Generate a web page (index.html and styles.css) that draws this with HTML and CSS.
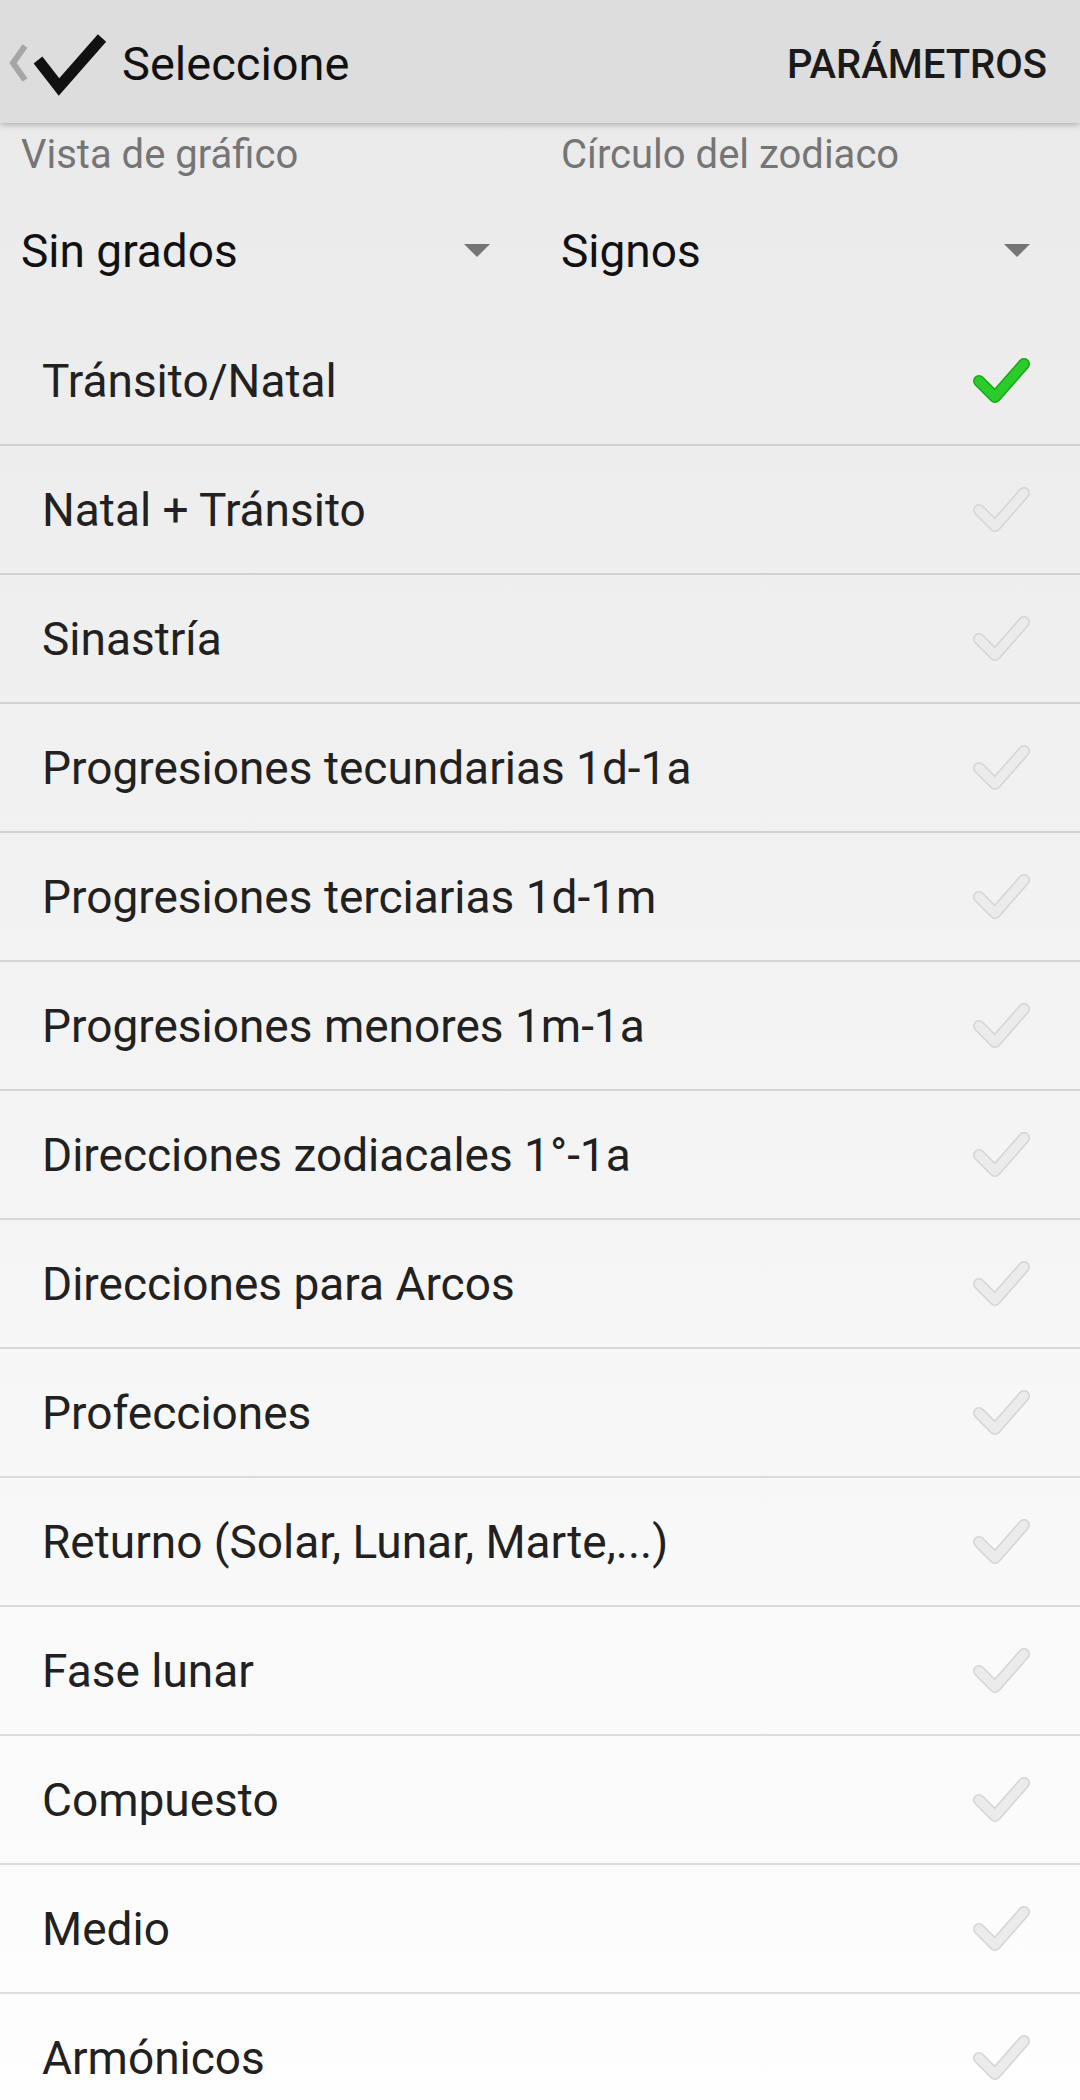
FILE: index.html
```html
<!DOCTYPE html>
<html lang="es">
<head>
  <meta charset="UTF-8">
  <meta name="viewport" content="width=device-width, initial-scale=1.0">
  <title>Seleccione</title>
  <link rel="stylesheet" href="styles.css">
</head>
<body>

<div class="screen">
  <div class="toolbar">
    <div class="back">
      <svg class="chevron" width="22" height="40" viewBox="0 0 22 40">
        <polyline points="17,3 5,20 17,37" fill="none" stroke="#a6a6a6" stroke-width="6"/>
      </svg>
      <svg class="done" width="80" height="66" viewBox="0 0 80 66">
        <polyline points="8,30 29,57 72,8" fill="none" stroke="#111" stroke-width="11" stroke-linejoin="miter"/>
      </svg>
    </div>
    <div class="title">Seleccione</div>
    <div class="action">PARÁMETROS</div>
  </div>

  <div class="spinners">
    <div class="spinner">
      <div class="spinner-label">Vista de gráfico</div>
      <div class="spinner-value">
        <span>Sin grados</span>
        <span class="arrow"></span>
      </div>
    </div>
    <div class="spinner">
      <div class="spinner-label">Círculo del zodiaco</div>
      <div class="spinner-value">
        <span>Signos</span>
        <span class="arrow"></span>
      </div>
    </div>
  </div>

  <ul class="chart-list">
    <li class="selected">Tránsito/Natal <svg class="tick" viewBox="0 0 58 50"><polyline class="edge" points="6,25 22,41 51,8"/><polyline class="fill" points="6,25 22,41 51,8"/></svg></li>
    <li>Natal + Tránsito <svg class="tick" viewBox="0 0 58 50"><polyline class="edge" points="6,25 22,41 51,8"/><polyline class="fill" points="6,25 22,41 51,8"/></svg></li>
    <li>Sinastría <svg class="tick" viewBox="0 0 58 50"><polyline class="edge" points="6,25 22,41 51,8"/><polyline class="fill" points="6,25 22,41 51,8"/></svg></li>
    <li>Progresiones tecundarias 1d-1a <svg class="tick" viewBox="0 0 58 50"><polyline class="edge" points="6,25 22,41 51,8"/><polyline class="fill" points="6,25 22,41 51,8"/></svg></li>
    <li>Progresiones terciarias 1d-1m <svg class="tick" viewBox="0 0 58 50"><polyline class="edge" points="6,25 22,41 51,8"/><polyline class="fill" points="6,25 22,41 51,8"/></svg></li>
    <li>Progresiones menores 1m-1a <svg class="tick" viewBox="0 0 58 50"><polyline class="edge" points="6,25 22,41 51,8"/><polyline class="fill" points="6,25 22,41 51,8"/></svg></li>
    <li>Direcciones zodiacales 1°-1a <svg class="tick" viewBox="0 0 58 50"><polyline class="edge" points="6,25 22,41 51,8"/><polyline class="fill" points="6,25 22,41 51,8"/></svg></li>
    <li>Direcciones para Arcos <svg class="tick" viewBox="0 0 58 50"><polyline class="edge" points="6,25 22,41 51,8"/><polyline class="fill" points="6,25 22,41 51,8"/></svg></li>
    <li>Profecciones <svg class="tick" viewBox="0 0 58 50"><polyline class="edge" points="6,25 22,41 51,8"/><polyline class="fill" points="6,25 22,41 51,8"/></svg></li>
    <li>Returno (Solar, Lunar, Marte,...) <svg class="tick" viewBox="0 0 58 50"><polyline class="edge" points="6,25 22,41 51,8"/><polyline class="fill" points="6,25 22,41 51,8"/></svg></li>
    <li>Fase lunar <svg class="tick" viewBox="0 0 58 50"><polyline class="edge" points="6,25 22,41 51,8"/><polyline class="fill" points="6,25 22,41 51,8"/></svg></li>
    <li>Compuesto <svg class="tick" viewBox="0 0 58 50"><polyline class="edge" points="6,25 22,41 51,8"/><polyline class="fill" points="6,25 22,41 51,8"/></svg></li>
    <li>Medio <svg class="tick" viewBox="0 0 58 50"><polyline class="edge" points="6,25 22,41 51,8"/><polyline class="fill" points="6,25 22,41 51,8"/></svg></li>
    <li>Armónicos <svg class="tick" viewBox="0 0 58 50"><polyline class="edge" points="6,25 22,41 51,8"/><polyline class="fill" points="6,25 22,41 51,8"/></svg></li>
  </ul>
</div>

</body>
</html>
```

FILE: styles.css
```css
body {
  margin: 0;
  font-family: Roboto, "Noto Sans", sans-serif;
  color: #212121;
}
.screen {
  min-height: 2100px;
  background: linear-gradient(#e9e9e9, #fefefe);
  overflow: hidden;
}
.toolbar {
  height: 123px;
  display: flex;
  align-items: center;
  background-color: #dddddd;
  box-shadow: 0 2px 6px rgba(0, 0, 0, 0.25);
  padding: 0 33px 0 8px;
}
.back {
  display: flex;
  align-items: center;
  height: 100%;
}
.chevron {
  margin-top: 2px;
}
.done {
  margin-top: 2px;
  filter: blur(0.6px);
}
.title {
  margin-left: 12px;
  padding-top: 4px;
  font-size: 47px;
  color: #111;
  flex: 1;
}
.action {
  padding-top: 5px;
  font-size: 40px;
  font-weight: 500;
  color: #1a1a1a;
}
.spinners {
  display: flex;
  height: 191px;
}
.spinner {
  width: 540px;
  box-sizing: border-box;
  padding: 6px 50px 0 21px;
}
.spinner-label {
  font-size: 40px;
  line-height: 52px;
  color: #757575;
}
.spinner-value {
  height: 133px;
  box-sizing: border-box;
  padding-top: 6px;
  display: flex;
  align-items: center;
  justify-content: space-between;
  font-size: 46px;
  color: #111;
}
.arrow {
  width: 0;
  height: 0;
  border-left: 13px solid transparent;
  border-right: 13px solid transparent;
  border-top: 13px solid #757575;
}
.chart-list {
  list-style: none;
  margin: 0;
  padding: 0;
}
.chart-list li {
  height: 127px;
  box-sizing: content-box;
  border-bottom: 2px solid rgba(0, 0, 0, 0.12);
  display: flex;
  align-items: center;
  justify-content: space-between;
  padding: 3px 49px 0 42px;
  margin-top: -3px;
  font-size: 46px;
}
.chart-list li:first-child {
  margin-top: 0;
}
.tick {
  width: 58px;
  height: 50px;
}
.tick polyline {
  fill: none;
  stroke-linecap: round;
  stroke-linejoin: round;
}
.tick .edge {
  stroke: #d4d4d4;
  stroke-width: 12;
}
.tick .fill {
  stroke: #ebebeb;
  stroke-width: 9;
}
.selected .tick .edge {
  stroke: #15a815;
}
.selected .tick .fill {
  stroke: #2bcb2b;
}
```
